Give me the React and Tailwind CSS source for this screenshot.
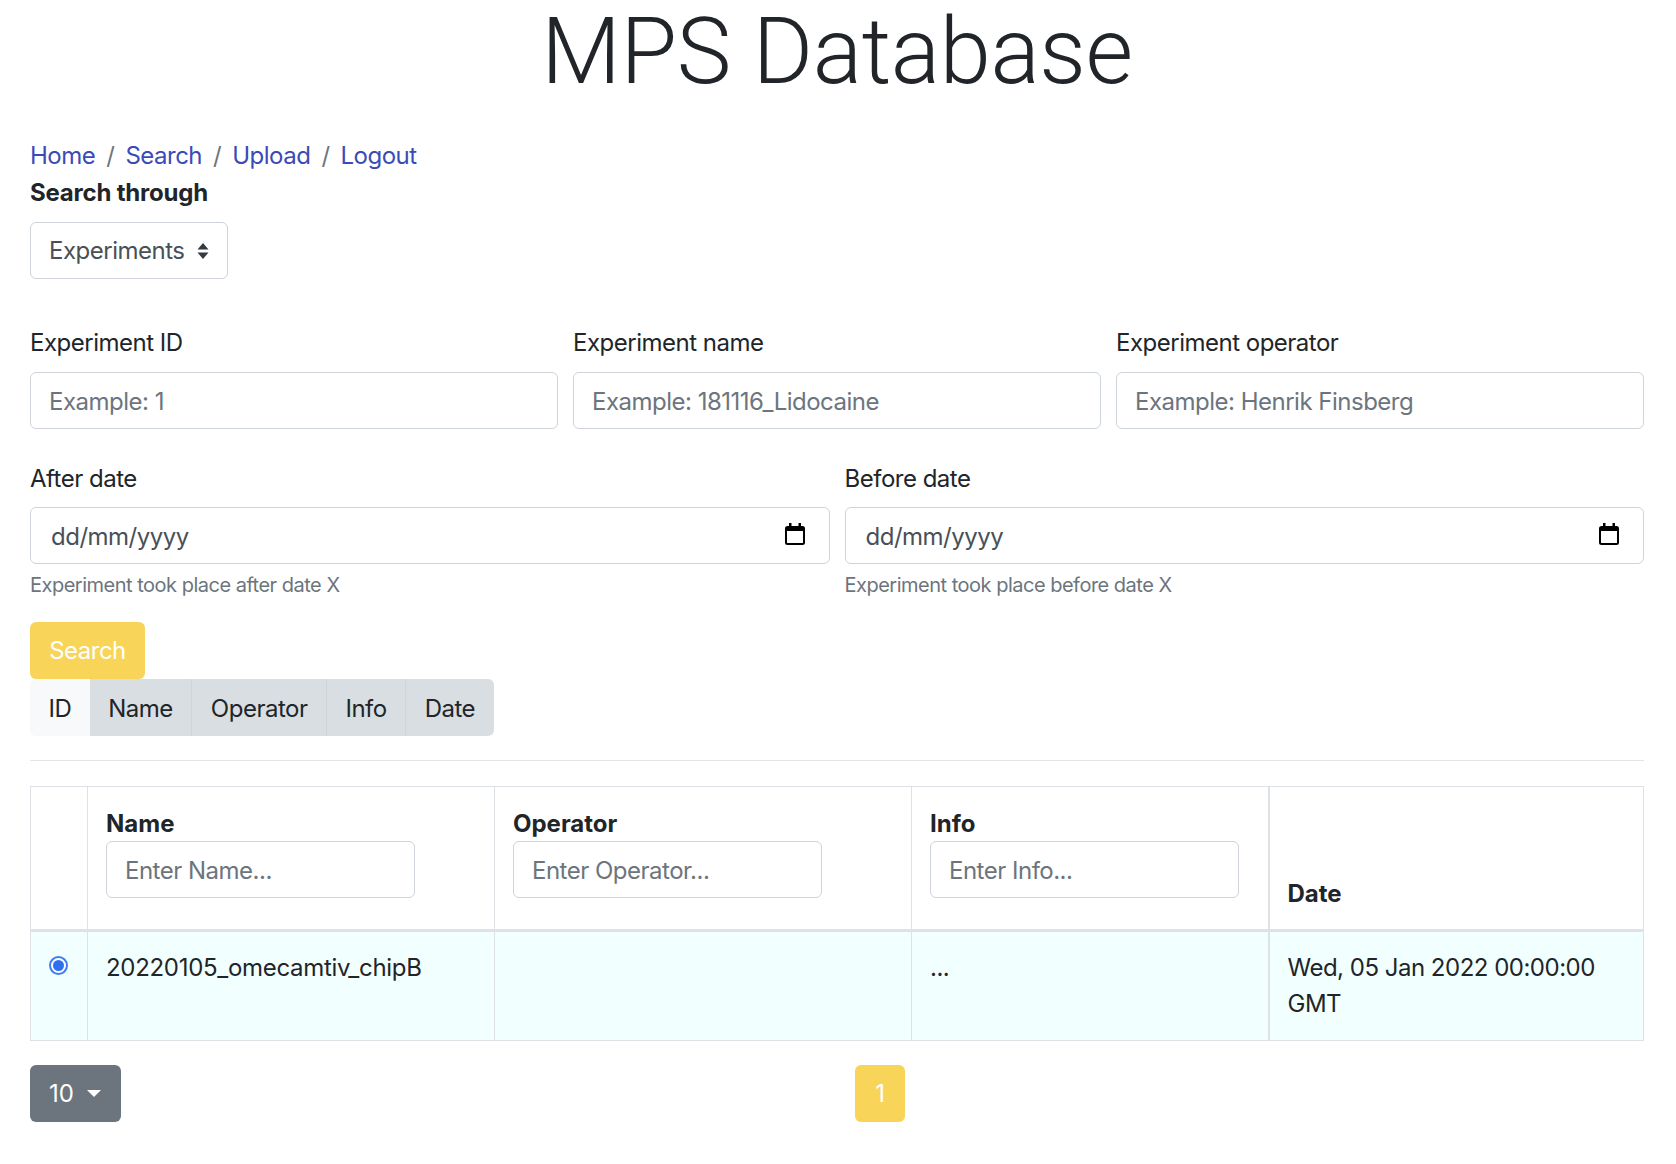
import React from 'react';

const inputClass = "w-full h-[57px] px-[18px] pt-[2px] bg-white border-[1.5px] border-[#ced4da] rounded-[6px] text-[24px] tracking-[-0.5px] text-[#495057] placeholder:text-[#6c757d] outline-none";

const TextField = ({ label, placeholder }) => (
  <div className="flex-1 min-w-0">
    <label className="block h-[36px] leading-[36px] mb-[11px]">{label}</label>
    <input type="text" placeholder={placeholder} className={inputClass} />
  </div>
);

const CalendarIcon = () => (
  <svg width="20" height="22" viewBox="0 0 20 22" className="text-black">
    <path d="M4 0h2.500v3h7V0H16v3h1.500A2.500 2.500 0 0 1 20 5.500v14a2.500 2.500 0 0 1-2.500 2.500h-15A2.500 2.500 0 0 1 0 19.500v-14A2.500 2.500 0 0 1 2.500 3H4V0zM2 8v11.500a.5.5 0 0 0 .5.5h15a.5.5 0 0 0 .5-.5V8H2z" fill="currentColor" />
  </svg>
);

const DateField = ({ label, help }) => (
  <div className="flex-1 min-w-0">
    <label className="block h-[36px] leading-[36px] mb-[10px]">{label}</label>
    <div className="flex items-center justify-between h-[57px] pl-[20px] pr-[24px] border-[1.5px] border-[#ced4da] rounded-[6px] text-[#495057]">
      <span className="pt-[2px]">dd/mm/yyyy</span>
      <span className="-mt-[3px]"><CalendarIcon /></span>
    </div>
    <p className="mt-[6px] h-[30px] leading-[30px] text-[20px] tracking-[-0.5px] text-[#6c757d]">{help}</p>
  </div>
);

const ToggleButton = ({ active, children }) => (
  <div className={`h-[57px] px-[18.500px] pt-[1px] leading-[57px] border-r border-[#cfd4d9] ${active ? 'bg-[#f8f9fa] rounded-l-[6px] border-r-0' : 'bg-[#d9dee2] last:rounded-r-[6px] last:border-r-0'}`}>
    {children}
  </div>
);

const HeaderCell = ({ label, placeholder, className = "" }) => (
  <th className={`p-[18px] text-left font-bold tracking-normal align-bottom border border-[#dee2e6] border-b-[3px] ${className}`}>
    <div className="leading-[36px] pt-[1px] -mb-[1px]">{label}</div>
    {placeholder && (
      <input type="text" placeholder={placeholder} className={`${inputClass} font-normal block !w-[309px] !pt-[1px] mb-[13px]`} />
    )}
  </th>
);

export default function App() {
  return (
    <div className="bg-white min-h-[1164px] pl-[30px] pr-[32px] text-[24px] leading-[36px] tracking-[-0.5px] text-[#212529] font-['Inter',sans-serif]">
      <h1 className="h-[110px] leading-[103px] text-center text-[92px] tracking-[-0.4px] font-light font-['Roboto',sans-serif]">MPS Database</h1>

      {/* Breadcrumb */}
      <nav className="mt-[28px] flex gap-[11px] h-[36px] text-[#3a4bb8]">
        <a>Home</a><span className="text-[#6c757d]">/</span>
        <a>Search</a><span className="text-[#6c757d]">/</span>
        <a>Upload</a><span className="text-[#6c757d]">/</span>
        <a>Logout</a>
      </nav>

      <div className="font-bold tracking-[-0.2px] h-[36px] mt-[1px]">Search through</div>

      <div className="mt-[11px] w-[198px] h-[57px] flex items-center justify-between pl-[18px] pr-[18px] border-[1.5px] border-[#ced4da] rounded-[6px] text-[#495057]">
        <span className="pt-[1px]">Experiments</span>
        <svg width="12" height="16" viewBox="0 0 12 16">
          <path d="M6 0l5.500 6.500H.5zM6 16L.5 9.500h11z" fill="#343a40" />
        </svg>
      </div>

      <div className="mt-[46px] flex gap-[15px]">
        <TextField label="Experiment ID" placeholder="Example: 1" />
        <TextField label="Experiment name" placeholder="Example: 181116_Lidocaine" />
        <TextField label="Experiment operator" placeholder="Example: Henrik Finsberg" />
      </div>

      <div className="mt-[32px] flex gap-[15px]">
        <DateField label="After date" help="Experiment took place after date X" />
        <DateField label="Before date" help="Experiment took place before date X" />
      </div>

      <button className="block mt-[22px] w-[115px] h-[57px] pt-[1px] bg-[#f8d458] text-white rounded-[6px]">Search</button>

      <div className="flex w-fit">
        <ToggleButton active>ID</ToggleButton>
        <ToggleButton>Name</ToggleButton>
        <ToggleButton>Operator</ToggleButton>
        <ToggleButton>Info</ToggleButton>
        <ToggleButton>Date</ToggleButton>
      </div>

      <hr className="mt-[24px] mb-[25px] border-t-[1.5px] border-[#e2e4e6]" />

      <table className="w-full table-fixed border-collapse border-[1.5px] border-[#dee2e6]">
        <colgroup>
          <col className="w-[57px]" />
          <col className="w-[407px]" />
          <col className="w-[417px]" />
          <col className="w-[357px]" />
          <col />
        </colgroup>
        <thead>
          <tr>
            <HeaderCell label="" />
            <HeaderCell label="Name" placeholder="Enter Name..." />
            <HeaderCell label="Operator" placeholder="Enter Operator..." />
            <HeaderCell label="Info" placeholder="Enter Info..." className="border-r-2" />
            <HeaderCell label="Date" />
          </tr>
        </thead>
        <tbody>
          <tr className="bg-[#f2ffff] align-top">
            <td className="border border-[#dee2e6] px-[18px] pt-[18px] pb-[18px]">
              <span className="mt-[6px] block w-[19px] h-[19px] rounded-full border-[2px] border-[#3d7ef5] bg-white p-[2px]">
                <span className="block w-full h-full rounded-full bg-[#2f6ff0]" />
              </span>
            </td>
            <td className="border border-[#dee2e6] px-[18px] pt-[18px] pb-[18px] tracking-[-0.3px]">20220105_omecamtiv_chipB</td>
            <td className="border border-[#dee2e6] px-[18px] pt-[18px] pb-[18px]"></td>
            <td className="border border-[#dee2e6] border-r-2 px-[18px] pt-[18px] pb-[18px]">...</td>
            <td className="border border-[#dee2e6] px-[18px] pt-[18px] pb-[18px]">Wed, 05 Jan 2022 00:00:00 GMT</td>
          </tr>
        </tbody>
      </table>

      {/* Pagination */}
      <div className="mt-[24px] flex">
        <div className="w-[91px] h-[57px] flex items-center gap-[13px] px-[19px] bg-[#6c757d] text-white tracking-normal rounded-[6px]">
          10
          <span className="w-0 h-0 border-x-[7px] border-x-transparent border-t-[7px] border-t-white" />
        </div>
        <div className="ml-[734px] w-[50px] h-[57px] leading-[57px] text-center bg-[#f8d458] text-white rounded-[6px]">1</div>
      </div>
    </div>
  );
}
